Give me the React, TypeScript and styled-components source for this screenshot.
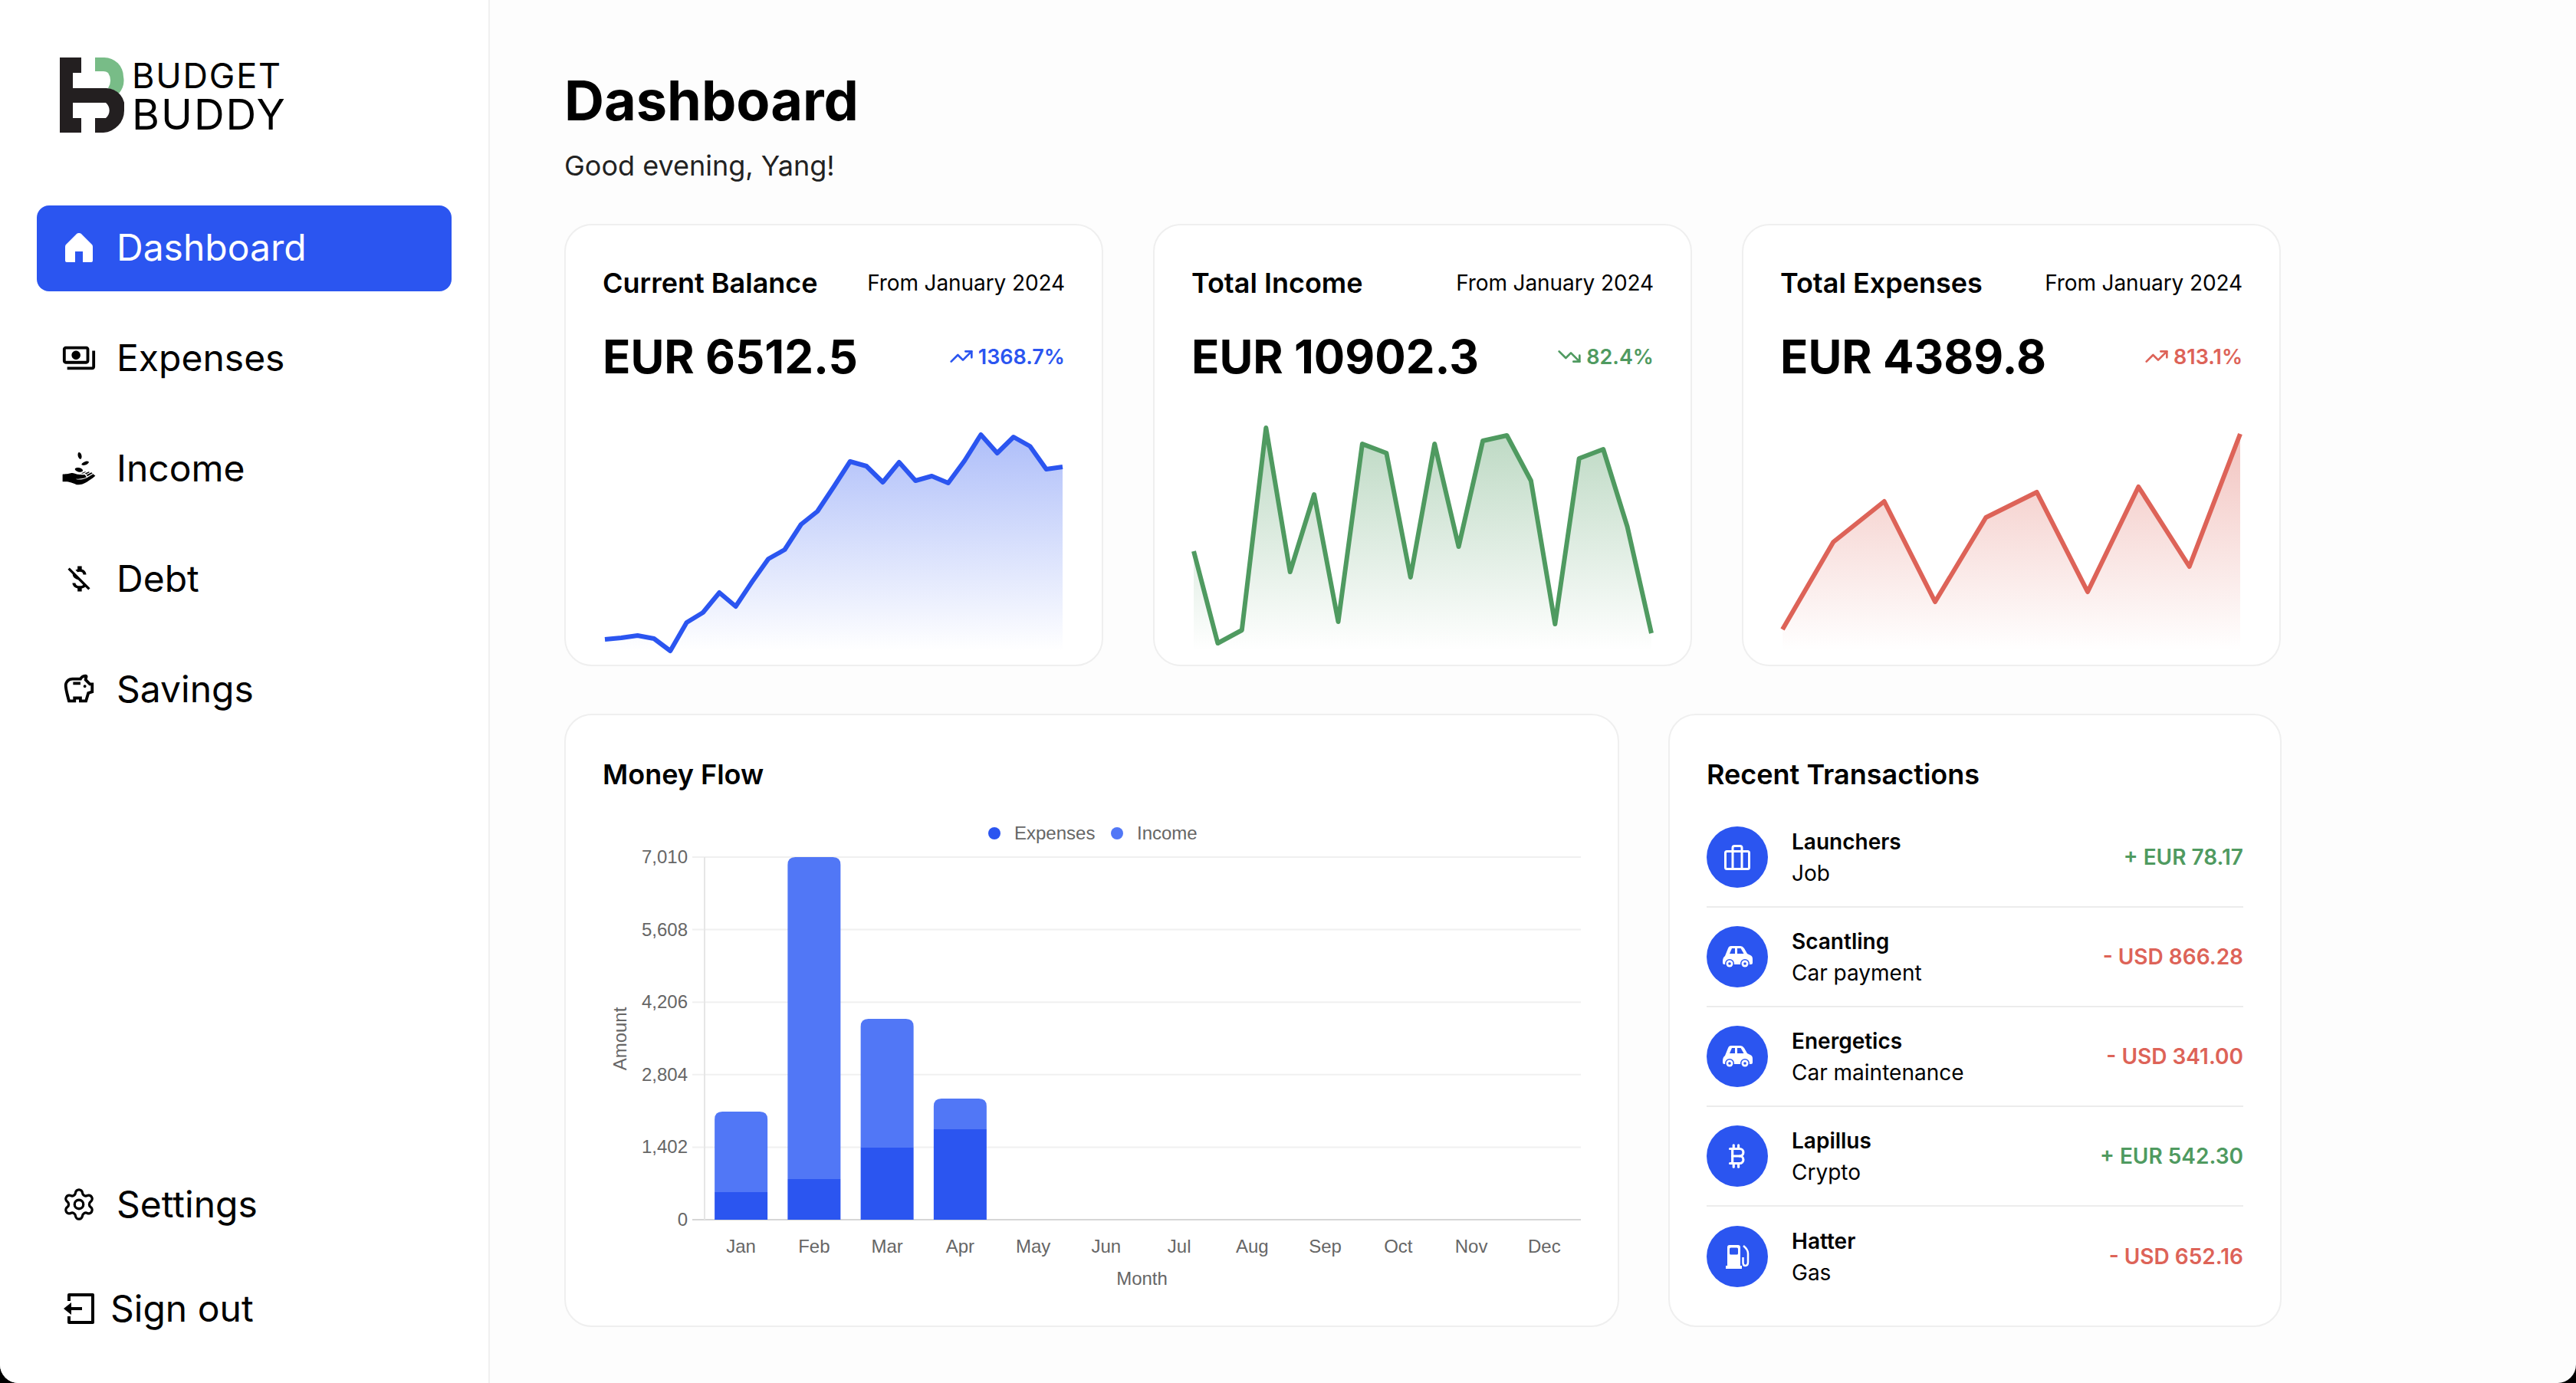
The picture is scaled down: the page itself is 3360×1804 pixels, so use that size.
import React from 'react';
import styled, { createGlobalStyle } from 'styled-components';
import { MdOutlinePayments, MdMoneyOff, MdOutlineSavings } from 'react-icons/md';
import { GiReceiveMoney } from 'react-icons/gi';
import { TbCurrencyBitcoin } from 'react-icons/tb';
import { Settings, TrendingUp, TrendingDown } from 'lucide-react';

const BLUE = '#2b55f0';
const GREEN = '#4f9a60';
const RED = '#dd6358';

const GlobalStyle = createGlobalStyle`
  html, body {
    margin: 0;
    padding: 0;
    background: #000;
  }
  * {
    box-sizing: border-box;
  }
`;

const Page = styled.div`
  width: 3360px;
  height: 1804px;
  display: flex;
  overflow: hidden;
  background: #fdfdfd;
  border-radius: 0 0 24px 24px;
  font-family: Inter, 'Liberation Sans', sans-serif;
  color: #000;
`;

const Sidebar = styled.aside`
  width: 639px;
  flex: none;
  display: flex;
  flex-direction: column;
  padding: 75px 48px 0;
  background: #fff;
  border-right: 2px solid #f0f0f0;
`;

const LogoRow = styled.div`
  display: flex;
  align-items: center;
  gap: 10px;
  margin: 0 0 95px 30px;
  height: 98px;
`;

const LogoText = styled.div`
  display: flex;
  flex-direction: column;
  font-weight: 400;
  line-height: 1;
`;

const LogoTop = styled.span`
  font-size: 45px;
  letter-spacing: 1.8px;
  line-height: 50px;
`;

const LogoBottom = styled.span`
  font-size: 55px;
  letter-spacing: 2px;
  line-height: 50px;
`;

const Nav = styled.nav`
  display: flex;
  flex-direction: column;
  gap: 32px;
  flex: 1;
`;

const NavItem = styled.a<{ $active?: boolean }>`
  height: 112px;
  display: flex;
  align-items: center;
  gap: 26px;
  padding: 0 0 3px 32px;
  border-radius: 16px;
  font-size: 48px;
  background: ${(p) => (p.$active ? BLUE : 'transparent')};
  color: ${(p) => (p.$active ? '#fff' : '#000')};
`;

const NavIcon = styled.span`
  width: 46px;
  height: 46px;
  display: flex;
  align-items: center;
  justify-content: center;
  flex: none;
`;

const BottomNav = styled.div`
  display: flex;
  flex-direction: column;
  padding-bottom: 40px;
`;

const SettingsItem = styled(NavItem)`
  margin-bottom: 24px;
`;

const SignOutItem = styled(NavItem)`
  gap: 18px;
`;

const Main = styled.main`
  flex: 1;
  padding: 82px 0 0 97px;
`;

const Title = styled.h1`
  margin: 0;
  font-size: 72px;
  font-weight: 700;
  line-height: 98px;
`;

const Subtitle = styled.p`
  margin: 14px 0 0;
  font-size: 36px;
  line-height: 44px;
  color: #222;
`;

const TopRow = styled.section`
  display: grid;
  grid-template-columns: repeat(3, 703px);
  gap: 65px;
  margin-top: 54px;
`;

const Card = styled.div`
  background: #fff;
  border: 2px solid #efefef;
  border-radius: 36px;
`;

const StatCard = styled(Card)`
  height: 577px;
  padding: 48px 48px 0;
  display: flex;
  flex-direction: column;
`;

const CardHead = styled.div`
  display: flex;
  justify-content: space-between;
  align-items: center;
  height: 54px;
`;

const CardTitle = styled.h2`
  margin: 0;
  font-size: 36px;
  font-weight: 600;
`;

const FromLabel = styled.span`
  font-size: 28px;
  letter-spacing: -0.1px;
`;

const ValueRow = styled.div`
  display: flex;
  justify-content: space-between;
  align-items: center;
  margin-top: 27px;
  height: 84px;
`;

const BigValue = styled.span`
  font-size: 60px;
  font-weight: 700;
  white-space: nowrap;
`;

const Delta = styled.span<{ $color: string }>`
  display: flex;
  align-items: center;
  gap: 6px;
  font-size: 27px;
  font-weight: 600;
  color: ${(p) => p.$color};
`;

const SparkSvg = styled.svg`
  display: block;
  margin-top: 42px;
`;

const BottomRow = styled.section`
  display: grid;
  grid-template-columns: 1376px 800px;
  gap: 64px;
  margin-top: 62px;
`;

const PanelTitle = styled.h2`
  margin: 2px 0 0;
  font-size: 36px;
  font-weight: 600;
  line-height: 54px;
`;

const FlowCard = styled(Card)`
  height: 800px;
  padding: 48px 48px 0;
`;

const RecentCard = styled(Card)`
  height: 800px;
  padding: 48px 48px 0;
`;

const ChartBox = styled.svg`
  display: block;
  margin: -2px 0 0 -48px;
`;

const Row = styled.div<{ $last?: boolean }>`
  height: 130px;
  display: flex;
  align-items: center;
  border-bottom: ${(p) => (p.$last ? 'none' : '2px solid #ececec')};
`;

const RowList = styled.div`
  margin-top: 17px;
`;

const Circle = styled.div`
  width: 80px;
  height: 80px;
  flex: none;
  border-radius: 50%;
  background: ${BLUE};
  color: #fff;
  display: flex;
  align-items: center;
  justify-content: center;
`;

const RowText = styled.div`
  flex: 1;
  margin-left: 31px;
  display: flex;
  flex-direction: column;
  gap: 7px;
`;

const RowName = styled.span`
  font-size: 28px;
  font-weight: 600;
  line-height: 34px;
`;

const RowSub = styled.span`
  font-size: 28px;
  line-height: 34px;
`;

const Amount = styled.span<{ $color: string }>`
  font-size: 28px;
  font-weight: 600;
  color: ${(p) => p.$color};
`;

const LogoMark = () => (
  <svg width="84" height="98" viewBox="0 0 84 98">
    <path d="M46 0h12a25 25 0 0 1 25 25 26 26 0 0 1-6 22 28 28 0 0 0-14-7 18 18 0 0 0 0-20 10 10 0 0 0-6-2H46z" fill="#78bc87" />
    <path
      d="M0 0h28v20H17v20h43a24 24 0 0 1 24 29 29 29 0 0 1-27 29H46V79h14a13 13 0 0 0 0-20H17v20h11v19H0z"
      fill="#231f20"
    />
  </svg>
);

const HomeIcon = () => (
  <svg width="36" height="38" viewBox="0 0 36 38" fill="currentColor">
    <path d="M18 0Q16 0 15 1L1 15Q0 16 0 18V36Q0 38 2 38H13V24H23V38H34Q36 38 36 36V18Q36 16 35 15L21 1Q20 0 18 0Z" />
  </svg>
);

const SignOutIcon = () => (
  <svg width="40" height="40" viewBox="0 0 40 40" fill="none" stroke="#000" strokeWidth="4">
    <path d="M7 10V2h31v36H7v-8" strokeLinejoin="round" />
    <path d="M24 20H8" />
    <path d="M0 20l10-8v16z" fill="#000" stroke="none" />
  </svg>
);

const SuitcaseIcon = () => (
  <svg width="34" height="33" viewBox="0 0 34 33" fill="none" stroke="#fff" strokeWidth="3">
    <rect x="1.5" y="8.5" width="31" height="23" rx="2" />
    <path d="M11 8v24M23 8v24" />
    <path d="M11 8V4Q11 1.500 13.500 1.500H20.500Q23 1.500 23 4V8" />
  </svg>
);

const CarIcon = () => (
  <svg width="41" height="29" viewBox="0 0 41 29">
    <path
      d="M1 20Q1 15 4 13L8 3Q9 0 12 0H24Q27 0 29 3L33 10L37 12Q40 13 40 17V22Q40 24 38 24H3Q1 24 1 22Z"
      fill="#fff"
    />
    <path d="M10 10L13 3H17V10ZM20 3H24.500L28.500 10H20Z" fill={BLUE} />
    <circle cx="10" cy="23" r="6" fill={BLUE} />
    <circle cx="10" cy="23" r="4.500" fill="#fff" />
    <circle cx="10" cy="23" r="1.800" fill={BLUE} />
    <circle cx="30" cy="23" r="6" fill={BLUE} />
    <circle cx="30" cy="23" r="4.500" fill="#fff" />
    <circle cx="30" cy="23" r="1.800" fill={BLUE} />
  </svg>
);

const PumpIcon = () => (
  <svg width="31" height="31" viewBox="0 0 31 31">
    <path d="M2 3Q2 0 5 0H16Q19 0 19 3V27H21V31H0V27H2Z" fill="#fff" />
    <rect x="5" y="3.500" width="11" height="9" rx="1.500" fill={BLUE} />
    <path d="M23 1Q29 6 29 11V22Q29 27 25.500 27Q22.500 27 22.500 23V16" fill="none" stroke="#fff" strokeWidth="2.500" />
  </svg>
);

const BlueLine = [
  285, 283, 280, 284, 300, 263, 250, 224, 242, 210, 180, 168, 135, 118, 86, 53, 59, 80, 54, 78, 72, 81, 52, 18, 42,
  21, 33, 63, 60,
];
const GreenLine = [170, 290, 273, 9, 197, 96, 262, 30, 42, 204, 30, 164, 26, 19, 78, 265, 49, 37, 138, 277];
const RedLine = [272, 158, 105, 236, 126, 93, 223, 86, 190, 17];

const Sparkline = ({ values, color, id }: { values: number[]; color: string; id: string }) => {
  const step = 597 / (values.length - 1);
  const pts = values.map((v, i) => `${(3 + i * step).toFixed(1)},${v}`);
  const area = `M3,300 L${pts.join(' L')} L600,300 Z`;
  return (
    <SparkSvg width="606" height="310" viewBox="0 0 606 310">
      <defs>
        <linearGradient id={id} x1="0" y1="0" x2="0" y2="1">
          <stop offset="0" stopColor={color} stopOpacity="0.38" />
          <stop offset="1" stopColor={color} stopOpacity="0" />
        </linearGradient>
      </defs>
      <path d={area} fill={`url(#${id})`} />
      <polyline points={pts.join(' ')} fill="none" stroke={color} strokeWidth="6" strokeLinejoin="round" />
    </SparkSvg>
  );
};

const MONTHS = ['Jan', 'Feb', 'Mar', 'Apr', 'May', 'Jun', 'Jul', 'Aug', 'Sep', 'Oct', 'Nov', 'Dec'];
const TICKS = ['7,010', '5,608', '4,206', '2,804', '1,402', '0'];
// [expenses top, income top] in chart pixels above the axis
const BARS: [number, number][] = [
  [36, 141],
  [53, 473],
  [94, 262],
  [118, 158],
];

const chartText = { fontFamily: "'Liberation Sans', Arial, sans-serif", fontSize: 24, fill: '#666' };

const barShape = (x: number, top: number, bottom: number, r: number) =>
  `M${x},${bottom} V${top + r} Q${x},${top} ${x + r},${top} H${x + 69 - r} Q${x + 69},${top} ${x + 69},${top + r} V${bottom} Z`;

const MoneyChart = () => {
  const left = 181;
  const right = 1324;
  const top = 83;
  const bottom = 556;
  const band = (right - left) / 12;
  const rowGap = (bottom - top) / 5;
  return (
    <ChartBox width="1372" height="680" viewBox="0 0 1372 680">
      <circle cx="559" cy="52" r="8" fill={BLUE} />
      <text x="585" y="60" {...chartText}>
        Expenses
      </text>
      <circle cx="719" cy="52" r="8" fill="#5177f6" />
      <text x="745" y="60" {...chartText}>
        Income
      </text>

      {TICKS.map((t, i) => (
        <g key={t}>
          <line
            x1={left - 16}
            x2={right}
            y1={top + i * rowGap}
            y2={top + i * rowGap}
            stroke={i === 5 ? '#d6d6d6' : '#f0f0f0'}
            strokeWidth="2"
          />
          <text x={left - 22} y={top + i * rowGap + 8} textAnchor="end" {...chartText}>
            {t}
          </text>
        </g>
      ))}
      <line x1={left} x2={left} y1={top} y2={bottom} stroke="#e6e6e6" strokeWidth="2" />

      {BARS.map(([exp, inc], i) => {
        const x = left + band * i + (band - 69) / 2;
        return (
          <g key={MONTHS[i]}>
            <path d={barShape(x, bottom - inc, bottom - exp, 10)} fill="#5177f6" />
            <rect x={x} y={bottom - exp} width="69" height={exp} fill={BLUE} />
          </g>
        );
      })}

      {MONTHS.map((m, i) => (
        <text key={m} x={left + band * (i + 0.5)} y={bottom + 43} textAnchor="middle" {...chartText}>
          {m}
        </text>
      ))}
      <text x={(left + right) / 2 - 1} y={bottom + 85} textAnchor="middle" {...chartText}>
        Month
      </text>
      <text transform={`translate(79 ${bottom - 236}) rotate(-90)`} textAnchor="middle" {...chartText}>
        Amount
      </text>
    </ChartBox>
  );
};

const stats = [
  { title: 'Current Balance', value: 'EUR 6512.5', delta: '1368.7%', color: BLUE, up: true, line: BlueLine },
  { title: 'Total Income', value: 'EUR 10902.3', delta: '82.4%', color: GREEN, up: false, line: GreenLine },
  { title: 'Total Expenses', value: 'EUR 4389.8', delta: '813.1%', color: RED, up: true, line: RedLine },
];

const transactions = [
  { name: 'Launchers', sub: 'Job', amount: '+ EUR 78.17', color: GREEN, icon: <SuitcaseIcon /> },
  { name: 'Scantling', sub: 'Car payment', amount: '- USD 866.28', color: RED, icon: <CarIcon /> },
  { name: 'Energetics', sub: 'Car maintenance', amount: '- USD 341.00', color: RED, icon: <CarIcon /> },
  { name: 'Lapillus', sub: 'Crypto', amount: '+ EUR 542.30', color: GREEN, icon: <TbCurrencyBitcoin size={38} /> },
  { name: 'Hatter', sub: 'Gas', amount: '- USD 652.16', color: RED, icon: <PumpIcon /> },
];

const App = () => {
  return (
    <Page>
      <GlobalStyle />
      <Sidebar>
        <LogoRow>
          <LogoMark />
          <LogoText>
            <LogoTop>BUDGET</LogoTop>
            <LogoBottom>BUDDY</LogoBottom>
          </LogoText>
        </LogoRow>
        <Nav>
          <NavItem $active>
            <NavIcon>
              <HomeIcon />
            </NavIcon>
            Dashboard
          </NavItem>
          <NavItem>
            <NavIcon>
              <MdOutlinePayments size={50} />
            </NavIcon>
            Expenses
          </NavItem>
          <NavItem>
            <NavIcon>
              <GiReceiveMoney size={50} />
            </NavIcon>
            Income
          </NavItem>
          <NavItem>
            <NavIcon>
              <MdMoneyOff size={44} />
            </NavIcon>
            Debt
          </NavItem>
          <NavItem>
            <NavIcon>
              <MdOutlineSavings size={46} />
            </NavIcon>
            Savings
          </NavItem>
        </Nav>
        <BottomNav>
          <SettingsItem>
            <NavIcon>
              <Settings size={48} strokeWidth={1.7} />
            </NavIcon>
            Settings
          </SettingsItem>
          <SignOutItem>
            <NavIcon>
              <SignOutIcon />
            </NavIcon>
            Sign out
          </SignOutItem>
        </BottomNav>
      </Sidebar>
      <Main>
        <Title>Dashboard</Title>
        <Subtitle>Good evening, Yang!</Subtitle>
        <TopRow>
          {stats.map((s) => (
            <StatCard key={s.title}>
              <CardHead>
                <CardTitle>{s.title}</CardTitle>
                <FromLabel>From January 2024</FromLabel>
              </CardHead>
              <ValueRow>
                <BigValue>{s.value}</BigValue>
                <Delta $color={s.color}>
                  {s.up ? <TrendingUp size={32} /> : <TrendingDown size={32} />}
                  {s.delta}
                </Delta>
              </ValueRow>
              <Sparkline values={s.line} color={s.color} id={s.title.replace(' ', '')} />
            </StatCard>
          ))}
        </TopRow>
        <BottomRow>
          <FlowCard>
            <PanelTitle>Money Flow</PanelTitle>
            <MoneyChart />
          </FlowCard>
          <RecentCard>
            <PanelTitle>Recent Transactions</PanelTitle>
            <RowList>
              {transactions.map((t, i) => (
                <Row key={t.name} $last={i === transactions.length - 1}>
                  <Circle>{t.icon}</Circle>
                  <RowText>
                    <RowName>{t.name}</RowName>
                    <RowSub>{t.sub}</RowSub>
                  </RowText>
                  <Amount $color={t.color}>{t.amount}</Amount>
                </Row>
              ))}
            </RowList>
          </RecentCard>
        </BottomRow>
      </Main>
    </Page>
  );
};

export default App;
